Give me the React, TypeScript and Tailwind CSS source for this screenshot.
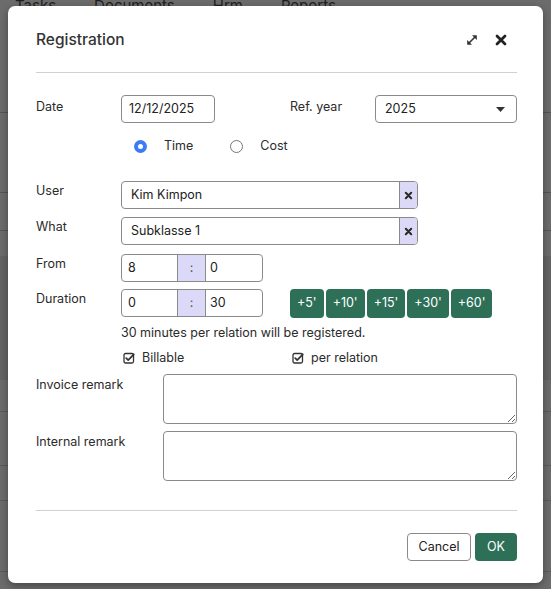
import React, { useState } from 'react';

const CheckIcon = () => (
  <svg width="12" height="12" viewBox="0 0 12 12" className="shrink-0">
    <rect x="1" y="1.5" width="9.5" height="9.5" rx="1.5" fill="none" stroke="#333" strokeWidth="1.3" />
    <path d="M3.2 6.2 L5.2 8.2 L10.8 2.4" fill="none" stroke="#333" strokeWidth="1.7" strokeLinecap="round" strokeLinejoin="round" />
  </svg>
);

const SmallX = () => (
  <svg width="9" height="9" viewBox="0 0 10 10">
    <path d="M2 2 L8 8 M8 2 L2 8" stroke="#2a2a2a" strokeWidth="2.3" strokeLinecap="round" />
  </svg>
);

const TimeInput = ({ h, m }: { h: string; m: string }) => (
  <div className="flex h-[28px] w-[142px] shrink-0 rounded-[4px] border border-[#8a8a8a] overflow-hidden text-[#222]">
    <div className="w-[55px] flex items-center pl-[6px]">{h}</div>
    <div className="w-[29px] flex items-center justify-center bg-[#dcd8f8] border-x border-[#8a8a8a] text-[#555]">:</div>
    <div className="flex-1 flex items-center pl-[4px]">{m}</div>
  </div>
);

const ClearableInput = ({ value }: { value: string }) => (
  <div className="flex h-[28px] w-[297px] shrink-0 rounded-[4px] border border-[#8a8a8a] overflow-hidden text-[#222]">
    <div className="flex-1 flex items-center pl-[9px]">{value}</div>
    <div className="w-[18px] flex items-center justify-center bg-[#dcd8f8] border-l border-[#8a8a8a]">
      <SmallX />
    </div>
  </div>
);

export default function App() {
  const [mode, setMode] = useState<'time' | 'cost'>('time');

  return (
    <div className="relative h-[589px] w-full overflow-hidden bg-[#6c6c6c]" style={{ fontFamily: 'Inter, "Noto Sans", sans-serif' }}>
      {/* dimmed page behind */}
      <div className="flex gap-[38px] pl-[15px] -mt-[5px] text-[15px] text-[#1f1f1f]">
        <span>Tasks</span>
        <span>Documents</span>
        <span>Hrm</span>
        <span>Reports</span>
      </div>
      <div className="absolute left-0 right-0 top-[112px] h-px bg-[#555]" />
      <div className="absolute left-0 right-0 top-[192px] h-px bg-[#555]" />
      <div className="absolute left-0 right-0 top-[230px] h-px bg-[#555]" />
      <div className="absolute left-0 right-0 top-[256px] h-[124px] bg-[#646464]" />
      <div className="absolute left-0 right-0 top-[411px] h-px bg-[#5a5a5a]" />
      <div className="absolute left-0 right-0 top-[465px] h-px bg-[#5a5a5a]" />
      <div className="absolute left-0 right-0 top-[500px] h-px bg-[#5a5a5a]" />
      <div className="absolute left-0 right-0 top-[571px] h-px bg-[#5a5a5a]" />

      {/* modal */}
      <div className="absolute left-[8px] top-[6px] w-[535px] h-[577px] rounded-[7px] bg-white shadow-[0_3px_8px_rgba(0,0,0,0.35)] pl-[28px] pr-[26px] pt-[20px] text-[12.5px] text-[#2b2b2b]">
        <div className="flex h-[28px] items-center justify-between">
          <h1 className="text-[15.5px] font-medium text-[#333]">Registration</h1>
          <div className="flex items-center gap-[17px] pr-[10px]">
            <svg width="12" height="12" viewBox="0 0 12 12">
              <path d="M3 9 L9 3" stroke="#333" strokeWidth="1.6" />
              <path d="M6 1.2 L10.8 1.2 L10.8 6 Z" fill="#333" />
              <path d="M1.2 6 L1.2 10.8 L6 10.8 Z" fill="#333" />
            </svg>
            <svg width="12" height="12" viewBox="0 0 12 12">
              <path d="M2 2 L10 10 M10 2 L2 10" stroke="#222" strokeWidth="2.8" strokeLinecap="round" />
            </svg>
          </div>
        </div>
        <div className="mt-[18px] h-px bg-[#d0d0d0]" />

        {/* date + ref year */}
        <div className="mt-[22px] flex">
          <div className="w-[85px] shrink-0 pt-[3px]">Date</div>
          <div className="h-[28px] w-[94px] shrink-0 rounded-[4px] border border-[#8a8a8a] flex items-center pl-[7px] text-[#222]">12/12/2025</div>
          <div className="w-[160px] shrink-0 pl-[75px] pt-[3px]">Ref. year</div>
          <div className="h-[28px] flex-1 rounded-[4px] border border-[#8a8a8a] flex items-center justify-between pl-[9px] pr-[11px] text-[#222]">
            <span>2025</span>
            <svg width="9" height="5" viewBox="0 0 9 5"><path d="M0 0 L9 0 L4.5 5 Z" fill="#333" /></svg>
          </div>
        </div>

        {/* radios */}
        <div className="mt-[15px] flex items-center pl-[98px] h-[16px]">
          <button onClick={() => setMode('time')} className="flex items-center gap-[17px]">
            <span className={`w-[13px] h-[13px] rounded-full flex items-center justify-center ${mode === 'time' ? 'bg-[#3b7bf6]' : 'border border-[#777]'}`}>
              {mode === 'time' && <span className="w-[5px] h-[5px] rounded-full bg-white" />}
            </span>
            <span>Time</span>
          </button>
          <button onClick={() => setMode('cost')} className="flex items-center gap-[17px] ml-[37px]">
            <span className={`w-[13px] h-[13px] rounded-full flex items-center justify-center ${mode === 'cost' ? 'bg-[#3b7bf6]' : 'border border-[#777]'}`}>
              {mode === 'cost' && <span className="w-[5px] h-[5px] rounded-full bg-white" />}
            </span>
            <span>Cost</span>
          </button>
        </div>

        {/* user / what */}
        <div className="mt-[27px] flex">
          <div className="w-[85px] shrink-0 pt-[1px]">User</div>
          <ClearableInput value="Kim Kimpon" />
        </div>
        <div className="mt-[8px] flex">
          <div className="w-[85px] shrink-0 pt-[1px]">What</div>
          <ClearableInput value="Subklasse 1" />
        </div>

        {/* from */}
        <div className="mt-[9px] flex">
          <div className="w-[85px] shrink-0 pt-[1px]">From</div>
          <TimeInput h="8" m="0" />
        </div>

        {/* duration */}
        <div className="mt-[7px] flex">
          <div className="w-[85px] shrink-0 pt-[1px]">Duration</div>
          <TimeInput h="0" m="30" />
          <div className="ml-[27px] flex gap-[2px]">
            {["+5'", "+10'", "+15'", "+30'", "+60'"].map((b) => (
              <button key={b} className="h-[29px] px-[7px] rounded-[4px] bg-[#2e7057] text-white text-[12.5px]">{b}</button>
            ))}
          </div>
        </div>
        <div className="mt-[6px] pl-[85px] h-[18px] flex items-center">30 minutes per relation will be registered.</div>

        {/* checkboxes */}
        <div className="mt-[7px] flex items-center h-[18px]">
          <div className="ml-[87px] w-[169px] flex items-center gap-[7px]"><CheckIcon />Billable</div>
          <div className="flex items-center gap-[7px]"><CheckIcon />per relation</div>
        </div>

        {/* remarks */}
        <div className="mt-[7px] flex">
          <div className="w-[127px] shrink-0 pt-[2px]">Invoice remark</div>
          <textarea className="h-[50px] flex-1 rounded-[4px] border border-[#8a8a8a] resize-y outline-none" />
        </div>
        <div className="mt-[7px] flex">
          <div className="w-[127px] shrink-0 pt-[2px]">Internal remark</div>
          <textarea className="h-[50px] flex-1 rounded-[4px] border border-[#8a8a8a] resize-y outline-none" />
        </div>

        <div className="mt-[29px] h-px bg-[#d0d0d0]" />

        <div className="mt-[22px] flex justify-end gap-[4px]">
          <button className="h-[28px] w-[64px] rounded-[4px] border border-[#8a8a8a] text-[#222]">Cancel</button>
          <button className="h-[28px] w-[42px] rounded-[4px] bg-[#2e7057] text-white">OK</button>
        </div>
      </div>
    </div>
  );
}
